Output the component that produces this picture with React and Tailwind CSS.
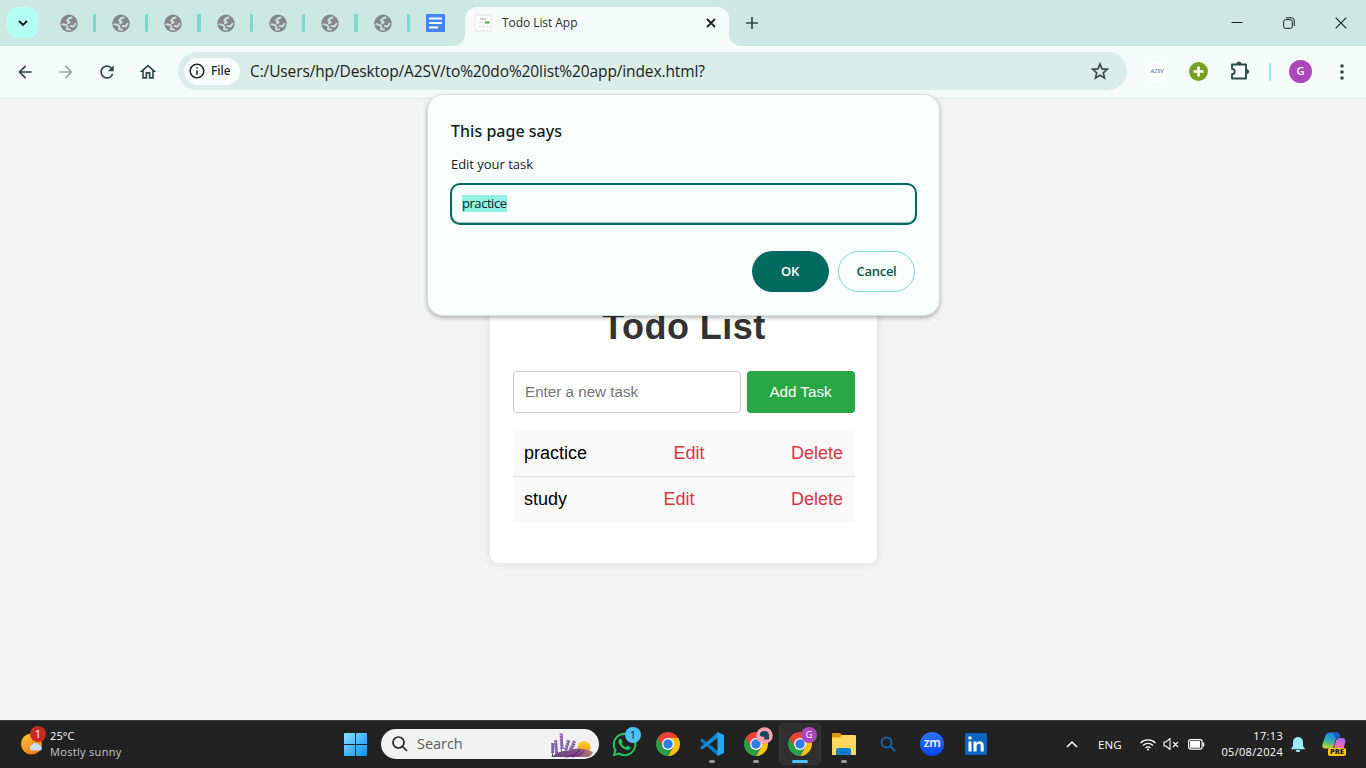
import React from "react";
import { MdRefresh, MdOutlineHome, MdArrowBack, MdArrowForward, MdInfoOutline } from "react-icons/md";
import { FaWhatsapp } from "react-icons/fa";

const UI = "font-['Open_Sans',sans-serif]";

function ChromeIcon() {
  return (
    <svg viewBox="2 2 44 44" className="size-6">
      <path fill="#ea4335" d="M4.95 13A22 22 0 0 1 43.05 13H24V24L14.5 29.5Z" />
      <path fill="#fbc116" d="M43.05 13A22 22 0 0 1 24 46L33.5 29.5 24 24V13Z" />
      <path fill="#2b9f48" d="M24 46A22 22 0 0 1 4.95 13L14.5 29.5 24 24 33.5 29.5Z" />
      <circle cx="24" cy="24" r="11" fill="#fff" />
      <circle cx="24" cy="24" r="8.7" fill="#2f7de9" />
    </svg>
  );
}

function TabStrip() {
  return (
    <div className="flex h-[46px] bg-[#cce8e2]">
      <div className="ml-[7px] mt-[7px] flex size-[31px] items-center justify-center rounded-[11px] bg-[#b3fff4]">
        <svg width="12" height="12" viewBox="0 0 12 12" fill="none" stroke="#14201e" strokeWidth="1.9"><path d="M2 4l4 4 4-4" /></svg>
      </div>
      <div className="ml-[21.5px] mt-[14px] flex">
        {[0, 1, 2, 3, 4, 5, 6].map((i) => (
          <div key={i} className="flex h-[18px] w-[52.4px]">
            <svg viewBox="0 0 18 18" className="size-[18px]">
              <circle cx="9" cy="9.3" r="8.7" fill="#858786" />
              <path fill="none" stroke="#c9dfda" strokeWidth="2" strokeLinecap="round" strokeLinejoin="round" d="M11.6 3.4Q8.2 4 7.2 6.600L9.600 8.200 8 9.400M2.400 10.200L6 11 7.600 13 7 15.200 10 15.600M15.400 9.800L13.600 12.400 10.800 12" />
            </svg>
            <div className="ml-[15px] w-[3.4px] rounded-[1px] bg-[#78dacb]" />
          </div>
        ))}
        <svg width="19" height="18" viewBox="0 0 19 18"><rect width="19" height="18" rx="1" fill="#4387fd" /><path stroke="#fff" strokeWidth="2" d="M3 4.5h13M3 9h13M3 13.500h9" /></svg>
      </div>
      <div className="ml-[7.700px] mt-[7px] flex items-end">
        <svg width="12" height="12" className="shrink-0"><path d="M12 0v12H0A12 12 0 0 0 12 0" fill="#f5fbf9" /></svg>
        <div className="flex h-[39px] w-[264px] items-center rounded-t-[12px] bg-[#f5fbf9] pb-[7px]">
          <svg width="18" height="18" viewBox="0 0 18 18" className="ml-[9px]"><rect width="18" height="18" fill="#efefef" /><rect x="2" y="2" width="14" height="14" rx="1" fill="#fff" /><path stroke="#888" strokeWidth=".8" d="M6 5h6" /><path stroke="#34a853" strokeWidth="2" d="M11 8.500h4.500" /><path stroke="#e2e2e2" strokeWidth="1.400" d="M4 8.500h5M4 12.500h3M8 12.500h3M12 12.500h3" /></svg>
          <span className={`${UI} ml-[10px] pb-px text-[12px] tracking-[-0.05px] text-[#26302e]`}>Todo List App</span>
          <svg width="12" height="12" viewBox="0 0 12 12" className="ml-auto mr-[12px]"><path stroke="#1b2523" strokeWidth="1.800" d="M2 2l8 8M10 2l-8 8" /></svg>
        </div>
        <svg width="12" height="12" className="shrink-0"><path d="M0 0v12h12A12 12 0 0 1 0 0" fill="#f5fbf9" /></svg>
      </div>
      <svg width="12" height="12" viewBox="0 0 12 12" className="ml-[5px] mt-[17px]"><path stroke="#2f4a45" strokeWidth="1.700" d="M0 6h12M6 0v12" /></svg>
      <div className="ml-auto mr-[19px] flex h-[45px] items-center gap-[40px] text-[#14201e]">
        <svg width="12" height="12" fill="none" stroke="currentColor"><path d="M0.500 5.500h11" /></svg>
        <svg width="12" height="12" fill="none" stroke="currentColor"><rect x=".7" y="2.700" width="8.600" height="8.600" rx="1.800" /><path d="M3 .8h5.500a2.800 2.800 0 0 1 2.800 2.800V9" /></svg>
        <svg width="12" height="12" fill="none" stroke="currentColor" strokeWidth="1.100"><path d="M.7.7l10.600 10.600M11.300.7L.7 11.300" /></svg>
      </div>
    </div>
  );
}

function Toolbar() {
  return (
    <div className="flex h-[53px] items-center border-b border-[#d9e6e3] bg-[#f5fbf9] pb-px text-[#2f4a45]">
      <MdArrowBack className="ml-[15px] size-5" />
      <MdArrowForward className="ml-[21px] size-5 text-[#9aa8a5]" />
      <MdRefresh className="ml-[21px] size-5" />
      <MdOutlineHome className="ml-[21px] size-5 text-[#2f4a45]" />
      <div className="mb-px ml-[20px] flex h-[38px] w-[949px] items-center rounded-full bg-[#daede8]">
        <div className="ml-[6px] flex h-[27px] w-[56px] items-center rounded-full bg-[#f8fdfb] pl-[4px]">
          <MdInfoOutline className="size-[18px] text-[#1a2321]" />
          <span className="ml-[5px] font-['Noto_Sans',sans-serif] text-[12px] font-medium text-[#1a2321]">File</span>
        </div>
        <span className={`${UI} ml-[10px] whitespace-nowrap pt-px text-[15.500px] tracking-[-0.12px] text-[#1a2321]`}>C:/Users/hp/Desktop/A2SV/to%20do%20list%20app/index.html?</span>
        <svg width="20" height="20" viewBox="0 0 20 20" className="ml-auto mr-[17px]" fill="none" stroke="#404b48" strokeWidth="1.700"><path d="M10 3l2 4.900 5.300.4-4 3.500 1.200 5.100-4.500-2.700-4.500 2.700 1.200-5.100-4-3.500 5.300-.4z" /></svg>
      </div>
      <div className="ml-[21px] flex size-[18px] items-center justify-center bg-white">
        <span className="font-['Open_Sans',sans-serif] text-[6px] font-semibold italic text-[#5b86c2]">A2SV</span>
      </div>
      <svg width="19" height="19" viewBox="0 0 19 19" className="ml-[23px]"><circle cx="9.500" cy="9.500" r="9.400" fill="#779f24" /><path stroke="#fff" strokeWidth="2.600" d="M4.500 9.500h10M9.500 4.500v10" /></svg>
      <svg width="20" height="20" viewBox="0 0 20 20" className="mb-px ml-[22px]" fill="none"><path stroke="#2f4a45" strokeWidth="1.900" strokeLinejoin="round" d="M2 3.500h14v14H2v-4.200a2.700 2.700 0 0 0 0-5.400z" /><path fill="#2f4a45" d="M6.500 3a2.500 2.500 0 0 1 5 0zM16.500 8a2.500 2.500 0 0 1 0 5z" /></svg>
      <div className="ml-[19px] h-[18px] w-[2px] bg-[#8ef3e6]" />
      <div className={`${UI} ml-[18px] flex size-[23px] items-center justify-center rounded-full bg-[#ab47bc] text-[11px] font-semibold text-white`}>G</div>
      <svg width="6" height="18" viewBox="0 0 6 18" className="ml-[27px]" fill="#2f4a45"><circle cx="3" cy="3" r="1.800" /><circle cx="3" cy="9" r="1.800" /><circle cx="3" cy="15" r="1.800" /></svg>
    </div>
  );
}

function TaskRow({ name, last }) {
  return (
    <div className={`flex items-center justify-between bg-[#f9f9f9] pl-[11px] pr-[12px] text-[18px] ${last ? "h-[45px]" : "h-[46px] border-b border-[#dddddd]"}`}>
      <span className="text-black">{name}</span>
      <span className="text-[#dc3545]">Edit</span>
      <span className="text-[#dc3545]">Delete</span>
    </div>
  );
}

function Page() {
  return (
    <div className="flex h-[621px] justify-center bg-[#f3f3f3] pl-px font-['Liberation_Sans',Arial,sans-serif]">
      <div className="mt-[158px] h-[306px] w-[387px] rounded-[8px] bg-white px-[23px] pt-[49px] shadow-[0_0_10px_rgba(0,0,0,0.1)]">
        <h1 className="pl-px text-center text-[36px] font-bold leading-[42px] tracking-[0.45px] text-[#333333]">Todo List</h1>
        <div className="mt-[23px] flex h-[42px] gap-[6px] text-[15.200px]">
          <div className="flex w-[228px] shrink-0 items-center rounded-[4px] border border-[#cccccc] pl-[11px] text-[#757575]">Enter a new task</div>
          <div className="flex w-[108px] shrink-0 items-center justify-center rounded-[4px] bg-[#28a745] pr-px text-white">Add Task</div>
        </div>
        <div className="mt-[18px] w-[342px]">
          <TaskRow name="practice" />
          <TaskRow name="study" last />
        </div>
      </div>
    </div>
  );
}

function PromptDialog() {
  return (
    <div className={`${UI} absolute left-[428px] top-[95px] h-[220px] w-[511px] rounded-[15px] bg-[#f9fffd] px-[22px] shadow-[0_0_0_1px_#d5e0dd,0_2px_4px_1px_rgba(0,0,0,0.28)]`}>
      <div className="ml-px mt-[24px] font-['Noto_Sans',sans-serif] text-[16px] font-medium leading-[24px] tracking-[0.02px] text-[#16201e]">This page says</div>
      <div className="ml-px mt-[11px] text-[13px] leading-[20px] tracking-[-0.03px] text-[#16201e]">Edit your task</div>
      <div className="mt-[9px] flex h-[42px] w-[467px] items-center rounded-[10px] border-2 border-[#006a61] pb-[2px] pl-[10px] shadow-[inset_0_-1px_1px_#9fb5b1]">
        <span className="bg-[#8ff3e6] text-[13px] leading-[17px] tracking-[-0.45px] text-[#16201e]">practice</span>
      </div>
      <div className="mr-[2px] mt-[26px] flex justify-end gap-[9px] text-[13px] font-semibold tracking-[-0.3px]">
        <div className="flex h-[41px] w-[77px] items-center justify-center rounded-full bg-[#006a61] pr-px text-white">OK</div>
        <div className="flex h-[41px] w-[77px] items-center justify-center rounded-full border border-[#7fdccf] text-[#00564f]">Cancel</div>
      </div>
    </div>
  );
}

function TaskbarApp({ children, mark, active }) {
  return (
    <div className={`relative flex h-[40px] w-[40px] items-center justify-center rounded-[4px] ${active ? "bg-[#2f2f2f] ring-1 ring-[#363636]" : ""}`}>
      {children}
      {mark && <div className={`absolute bottom-px h-[3px] rounded-full ${active ? "w-[16px] bg-[#4cc2ff]" : "w-[6px] bg-[#9a9a9a]"}`} />}
    </div>
  );
}

function Lavender() {
  return (
    <svg width="44" height="27" viewBox="0 0 44 27">
      <defs>
        <linearGradient id="hill" x2="1"><stop stopColor="#6b3c86" /><stop offset=".6" stopColor="#8d4e91" /><stop offset="1" stopColor="#b48060" /></linearGradient>
        <linearGradient id="glow" x2="0" y2="1"><stop stopColor="#ffd21f" /><stop offset="1" stopColor="#fb9a2b" /></linearGradient>
      </defs>
      <circle cx="34" cy="16.500" r="6.500" fill="url(#glow)" />
      <path fill="url(#hill)" d="M1 26Q10 19 18 19.500 30 15 43 21 42 25 38 26z" />
      <path stroke="#5d2d75" strokeWidth="1.200" fill="none" d="M15 26q10-1 15-7M22 26q8-1 12-6" />
      <path stroke="#4f7046" strokeWidth="1" fill="none" d="M2.500 25V14M6 25L5 12M11.500 24L11 8M15 23l4-12M20 22l5-9" />
      <path stroke="#8d65bd" strokeWidth="3" strokeDasharray="2.200 .5" fill="none" d="M2.500 22V12M6.500 22L5.500 9M12 18L11 2M15.500 19l3-10M20 19l4.500-9" />
      <path stroke="#6d4798" strokeWidth="1" strokeDasharray="1.500 1" fill="none" d="M3.500 22V13M7.500 22L6.500 11M13 18L12 4M16.500 19l3-9M21 19l4-8" />
    </svg>
  );
}

function Taskbar() {
  return (
    <div className={`${UI} flex h-[48px] items-center border-t border-[#3d403f] bg-[#222222] pb-px text-white`}>
      <div className="relative ml-[20px] h-[30px] w-[27px]">
        <svg width="27" height="30" viewBox="0 0 27 30">
          <defs><linearGradient id="sun" x2=".6" y2="1"><stop stopColor="#ffc933" /><stop offset="1" stopColor="#f27a1c" /></linearGradient></defs>
          <circle cx="11.500" cy="15" r="10.500" fill="url(#sun)" />
          <path fill="#c5dcfa" d="M11 21.500a3.500 3.500 0 0 1 .5-5.500 5 5 0 0 1 8 0 3 3 0 0 1 1 5.500z" />
        </svg>
        <div className="absolute left-[10px] top-[-3px] flex size-[16px] items-center justify-center rounded-full bg-[#c42b1c] text-[11px]">1</div>
      </div>
      <div className="ml-[3px] w-[120px] pb-px text-[11px] leading-[16px]">
        <div className="tracking-[0.1px]">25°C</div>
        <div className="tracking-[0.320px] text-[#c8c8c8]">Mostly sunny</div>
      </div>
      <svg width="23" height="23" viewBox="0 0 23 23" className="ml-[174px]">
        <defs><linearGradient id="win" x2="1" y2="1"><stop stopColor="#8be0ff" /><stop offset="1" stopColor="#0a91f5" /></linearGradient></defs>
        <path fill="url(#win)" d="M0 1Q0 0 1 0h10v11H0zM12 0h10q1 0 1 1v10H12zM0 12h11v11H1q-1 0-1-1zM12 12h11v10q0 1-1 1H12z" />
      </svg>
      <div className="ml-[14px] flex h-[30px] w-[218px] items-center rounded-full bg-[#f2f2f2] text-[#5c5c5c]">
        <svg width="16" height="16" viewBox="0 0 16 16" className="ml-[11px]" fill="none" stroke="#252525" strokeWidth="1.700"><circle cx="6.500" cy="6.500" r="5.500" /><path d="M10.500 10.500l4.500 4.500" /></svg>
        <span className="ml-[9px] text-[14.500px] tracking-[-0.050px]">Search</span>
        <span className="ml-auto mr-[5px]"><Lavender /></span>
      </div>
      <div className="ml-[5px] flex gap-[4px]">
        <TaskbarApp>
          <FaWhatsapp className="size-[27px] text-[#22c95e]" />
          <span className="absolute left-[21px] top-[3px] flex size-[16px] items-center justify-center rounded-full bg-[#4cc2ff] text-[11px] text-[#112233]">1</span>
        </TaskbarApp>
        <TaskbarApp><ChromeIcon /></TaskbarApp>
        <TaskbarApp mark>
          <svg width="24" height="24" viewBox="0 0 24 24"><path fill="#0878bf" d="M0 8.300L2 6.500 18 19v5L1 9.500z" /><path fill="#168cd4" d="M0 15.700L18 0v6L2 17.600z" /><path fill="#29a8f2" d="M17.500 0L24 3v18l-6.500 3z" /></svg>
        </TaskbarApp>
        <TaskbarApp mark>
          <ChromeIcon />
          <svg width="17" height="17" viewBox="0 0 17 17" className="absolute left-[20px] top-[3px]"><circle cx="8.500" cy="8.500" r="8.300" fill="#ff9dab" /><path fill="#164866" d="M4 6.500Q5 3.500 8.500 4q4 0 4.500 4v4.500H8L8.500 10 5.500 9.500 4 8.500z" /></svg>
        </TaskbarApp>
        <TaskbarApp mark active>
          <ChromeIcon />
          <span className="absolute left-[21px] top-[3px] flex size-[16px] items-center justify-center rounded-full bg-[#ab47bc] text-[9px]">G</span>
        </TaskbarApp>
        <TaskbarApp mark>
          <svg width="24" height="22" viewBox="0 0 24 22"><path fill="#d99b0b" d="M0 1q0-1 1-1h7l2 2v4H0z" /><path fill="#ffd75c" d="M0 4.500h8L10 2h13q1 0 1 1v19H0z" /><path fill="#1680d0" d="M4 22v-5q0-2 2-2h11q2 0 2 2v5z" /><path stroke="#0c5fae" d="M8 19.500h7" /></svg>
        </TaskbarApp>
        <TaskbarApp>
          <svg width="16" height="16" viewBox="0 0 16 16" fill="none" stroke="#1665ae" strokeWidth="1.900"><circle cx="6.500" cy="6.500" r="5" /><path d="M10 10l5 5" /></svg>
        </TaskbarApp>
        <TaskbarApp>
          <span className="flex size-6 items-center justify-center rounded-full bg-linear-to-b from-[#2d72ff] to-[#0647e8] pb-[2px] text-[12px] font-semibold leading-none tracking-[-0.400px]">zm</span>
        </TaskbarApp>
        <TaskbarApp>
          <svg width="22" height="22" viewBox="0 0 22 22"><rect width="22" height="22" rx="1.500" fill="#0a66c2" /><path fill="#fff" d="M3.500 8.500h3v10h-3zM8.500 8.500h3v1.400q1-1.700 3.200-1.700 4 0 4 4.500v5.800h-3v-5.300q0-2.400-1.900-2.400-2.200 0-2.200 2.500v5.200H8.500z" /><circle cx="5" cy="5" r="1.800" fill="#fff" /></svg>
        </TaskbarApp>
      </div>
      <svg width="12" height="8" viewBox="0 0 12 8" className="ml-[70px]" fill="none" stroke="#fff" strokeWidth="1.500"><path d="M1 7l5-5 5 5" /></svg>
      <span className="ml-[20px] w-[24px] whitespace-nowrap pt-px text-[11.500px] tracking-[0.100px]">ENG</span>
      <svg width="16" height="13" viewBox="0 0 16 13" className="ml-[18px]" fill="none" stroke="#fff" strokeWidth="1.200"><path d="M.5 5a10.500 10.500 0 0 1 15 0M3 7.500a7 7 0 0 1 10 0M5.500 10a3.500 3.500 0 0 1 5 0" /><circle cx="8" cy="11.500" r="1" fill="#fff" stroke="none" /></svg>
      <svg width="16" height="12" viewBox="0 0 16 12" className="ml-[7px]" fill="none" stroke="#fff" strokeWidth="1.100"><path d="M1 4h2l4-3.500v11L3 8H1zM10 4l5 5M15 4L10 9" /></svg>
      <svg width="17" height="11" viewBox="0 0 17 11" className="ml-[9px]"><rect x=".6" y=".6" width="13.500" height="9.500" rx="2" fill="none" stroke="#fff" strokeWidth="1.200" /><rect x="2" y="2" width="10" height="6.800" fill="#fff" /><path stroke="#fff" strokeWidth="1.400" d="M15.500 3.500v4" /></svg>
      <div className="ml-auto pb-px text-right text-[11px] leading-[16px] tracking-[0.320px]">
        <div>17:13</div>
        <div>05/08/2024</div>
      </div>
      <svg width="14" height="15" viewBox="0 0 14 15" className="ml-[8px]" fill="#98ecff"><path d="M7 0a5 5 0 0 1 5 5v4l1.700 2.300v.9H.3v-.9L2 9V5a5 5 0 0 1 5-5zM4.800 13h4.400a2.200 2.200 0 0 1-4.400 0z" /></svg>
      <div className="relative ml-[17px] mr-[19px] h-[24px] w-[25px]">
        <svg width="25" height="24" viewBox="0 0 25 24">
          <defs>
            <linearGradient id="cpa" x1=".3" x2="0.100" y1="0" y2="1"><stop stopColor="#1a86e0" /><stop offset=".4" stopColor="#27a9c4" /><stop offset=".7" stopColor="#6cc26a" /><stop offset="1" stopColor="#ecd533" /></linearGradient>
            <linearGradient id="cpb" x1=".5" x2=".3" y1="0" y2="1"><stop stopColor="#a366f0" /><stop offset=".6" stopColor="#e068c4" /><stop offset="1" stopColor="#f77a7a" /></linearGradient>
          </defs>
          <path fill="url(#cpa)" d="M8 .5h6.500q2.400 0 3 2.200L18.300 5H17q-2.600 0-3.400 2.500L11 16.500H3.500Q-.6 16.500.5 12L3.600 3.500Q4.700.5 8 .5z" />
          <path fill="#1b57c8" d="M11 .5h3.500q2.400 0 3 2.200L18.300 5H17q-2.200 0-3.200 2z" />
          <path fill="url(#cpb)" d="M16.800 6H20q4.200 0 3.200 4.200L21.500 17H11.500l2.500-8.500Q14.800 6 16.800 6z" />
        </svg>
        <span className="absolute bottom-0 left-[6px] flex h-[8px] w-[18px] items-center justify-center rounded-[2px] bg-[#ffc814] text-[7.500px] font-extrabold leading-none text-[#222222]">PRE</span>
      </div>
    </div>
  );
}

export default function App() {
  return (
    <div className="relative h-[768px] w-[1366px] overflow-hidden">
      <TabStrip />
      <Toolbar />
      <Page />
      <Taskbar />
      <PromptDialog />
    </div>
  );
}
